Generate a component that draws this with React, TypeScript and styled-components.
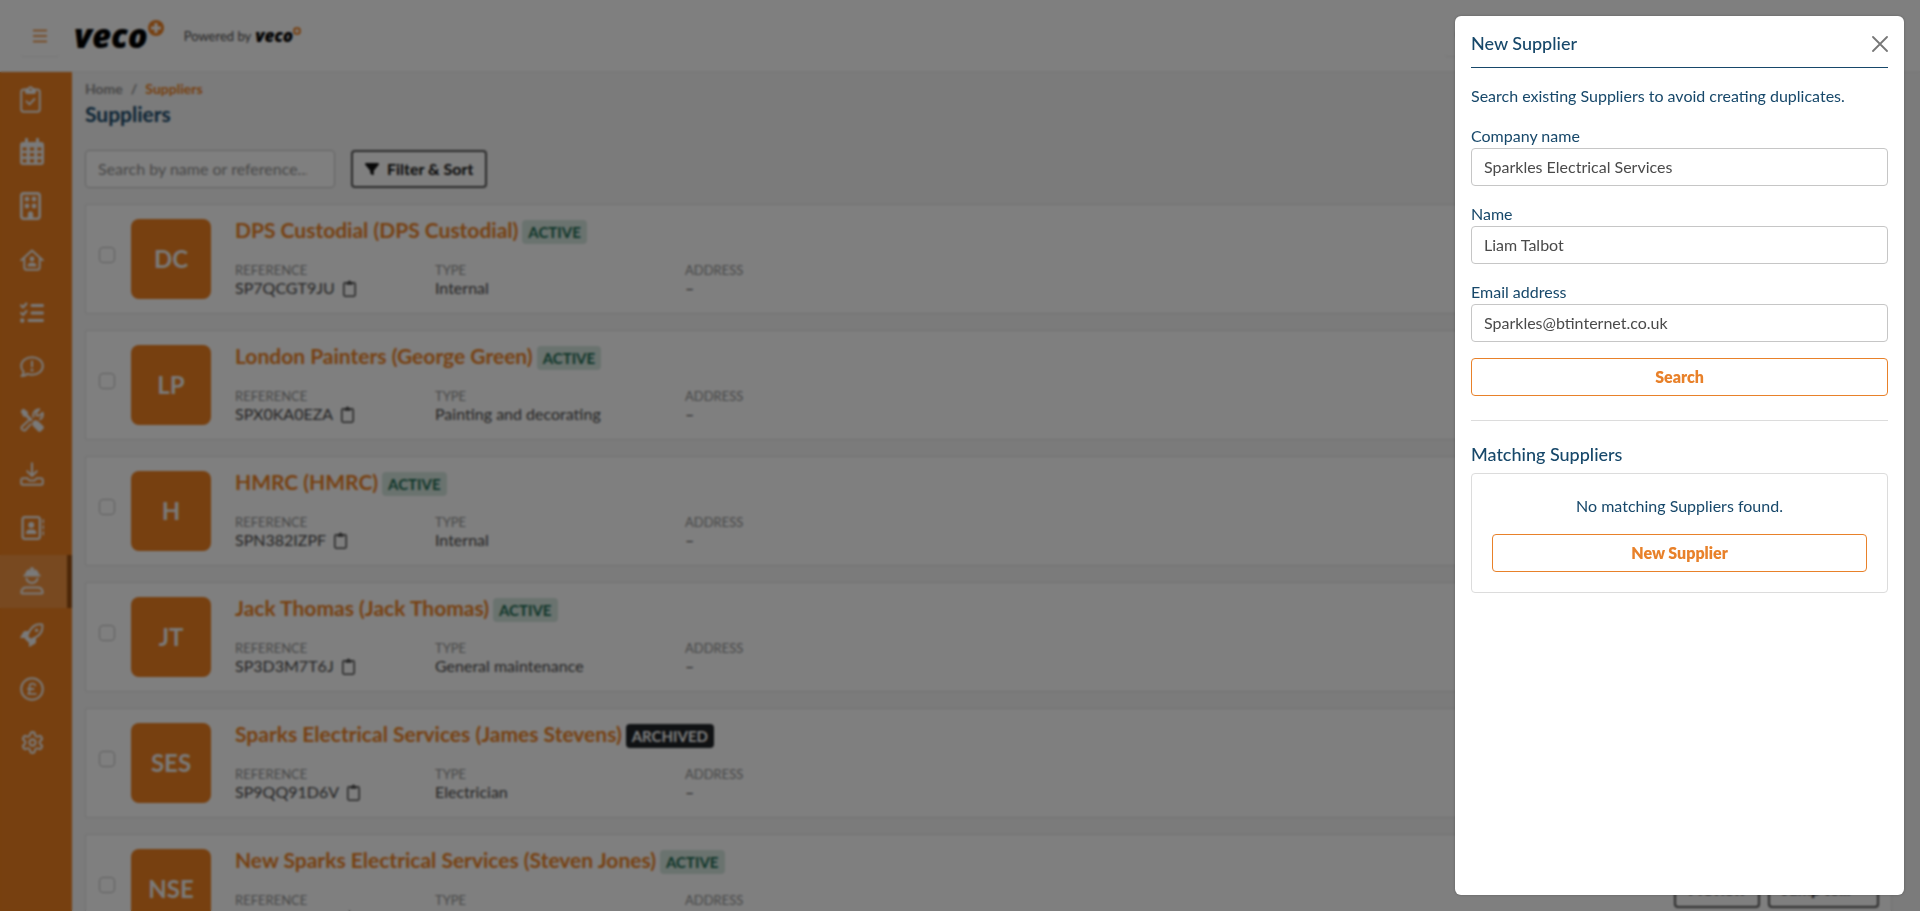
import React, { useId } from "react";
import styled, { createGlobalStyle, css } from "styled-components";
import {
  FaFilter,
  FaListCheck,
  FaMagnifyingGlass,
  FaRegAddressBook,
  FaRegBuilding,
} from "react-icons/fa6";
import { LuSettings } from "react-icons/lu";

const color = {
  orange: "#ee8020",
  action: "#e8812a",
  navy: "#17486a",
  text: "#4a4a4a",
  muted: "#8f8f8f",
  line: "#dcdcdc",
  field: "#c6c6c6",
  page: "#f6f6f6",
};

const GlobalStyle = createGlobalStyle`
  *, *::before, *::after { box-sizing: border-box; }
  html, body { margin: 0; height: 100%; overflow: hidden; }
  body {
    background: ${color.page};
    color: ${color.text};
    font-family: Lato, "Open Sans", sans-serif;
    font-size: 16px;
    line-height: 24px;
  }
  button, input { font: inherit; }
  h1, h2, h3, p, ul, ol, dl, dd { margin: 0; padding: 0; list-style: none; }
`;

/* ---------- header ---------- */

const Header = styled.header`
  display: flex;
  align-items: center;
  height: 72px;
  padding: 0 20px;
  background: #fff;
  border-bottom: 1px solid #f0f0f0;
`;

const IconButton = styled.button<{ $tone?: string }>`
  display: grid;
  place-items: center;
  width: 40px;
  height: 40px;
  padding: 0;
  border: 0;
  border-radius: 4px;
  background: #fff;
  color: ${(p) => p.$tone ?? "#222"};
  box-shadow: 0 2px 2px -1px rgba(0, 0, 0, 0.08);
`;

const Brand = styled.a`
  display: flex;
  margin-left: 14px;
  color: #000;
  text-decoration: none;
`;

const Wordmark = styled.span<{ $small?: boolean }>`
  display: flex;
  align-items: flex-start;
  font-family: "Open Sans", sans-serif;
  font-style: italic;
  font-weight: 800;
  font-size: ${(p) => (p.$small ? 17 : 33)}px;
  line-height: ${(p) => (p.$small ? 18 : 32)}px;
  color: #000;
`;

const Powered = styled.p`
  display: flex;
  align-items: center;
  gap: 4px;
  margin-left: 20px;
  font-size: 13px;
`;

const HeaderActions = styled.div`
  display: flex;
  flex: 0 0 456px;
  margin-left: auto;
`;

/* ---------- side navigation ---------- */

const Body = styled.div`
  display: flex;
  align-items: stretch;
  height: calc(100vh - 72px);
`;

const SideNav = styled.nav`
  flex: 0 0 72px;
  background: ${color.orange};
`;

const NavList = styled.ul`
  display: grid;
  grid-template-rows: repeat(13, 1fr);
  height: 697px;
`;

const NavLink = styled.a<{ $active?: boolean }>`
  display: flex;
  align-items: center;
  height: 100%;
  padding-left: 20px;
  color: #f4f4f4;
  ${(p) =>
    p.$active &&
    css`
      background: rgba(255, 255, 255, 0.15);
      border-right: 5px solid #9a4f10;
    `}
`;

const BuildingIcon = styled(FaRegBuilding)`
  width: 21px;
  height: 28px;
`;

/* ---------- supplier list ---------- */

const Main = styled.main`
  flex: 1;
  min-width: 0;
  padding: 8px 28px 0 13px;
  overflow: hidden;
`;

const Crumbs = styled.ol`
  display: flex;
  gap: 8px;
  font-size: 14px;
  font-weight: 700;
  line-height: 18px;
  color: ${color.muted};
`;

const Crumb = styled.a<{ $current?: boolean }>`
  color: ${(p) => (p.$current ? color.orange : color.muted)};
  text-decoration: none;
`;

const PageTitle = styled.h1`
  margin-top: 2px;
  font-size: 21px;
  line-height: 28px;
  color: ${color.navy};
`;

const Toolbar = styled.div`
  display: flex;
  gap: 16px;
  margin: 22px 0 16px;
`;

const SearchInput = styled.input`
  width: 250px;
  height: 38px;
  padding: 0 12px 2px;
  border: 1px solid ${color.field};
  border-radius: 4px;
  background: #fff;
  &::placeholder {
    color: ${color.muted};
    opacity: 1;
  }
`;

const DarkButton = styled.button`
  display: flex;
  align-items: center;
  gap: 8px;
  height: 38px;
  padding: 0 12px;
  border: 2px solid #555;
  border-radius: 4px;
  background: #fff;
  color: #111;
  font-weight: 700;
`;

const JumpButton = styled(DarkButton)`
  min-width: 111px;
`;

const CardList = styled.ul`
  display: grid;
  gap: 16px;
`;

const Card = styled.li`
  display: flex;
  align-items: center;
  height: 110px;
  padding: 0 12px;
  border: 1px solid #e2e2e2;
  border-radius: 2px;
  background: #fff;
`;

const Tick = styled.input`
  appearance: none;
  width: 16px;
  height: 16px;
  margin: 0 16px 8px 1px;
  border: 1px solid #bdbdbd;
  border-radius: 4px;
  background: #fff;
`;

const Avatar = styled.div`
  display: grid;
  place-items: center;
  width: 80px;
  height: 80px;
  border-radius: 8px;
  background: ${color.orange};
  color: #f6f6f6;
  font-size: 24px;
  font-weight: 700;
`;

const Details = styled.div`
  flex: 1;
  margin-left: 24px;
`;

const CardTitle = styled.h2`
  display: flex;
  gap: 4px;
  margin-bottom: 18px;
  font-size: 21px;
  line-height: 20px;
`;

const SupplierLink = styled.a`
  color: ${color.orange};
  text-decoration: none;
`;

const Badge = styled.span<{ $archived?: boolean }>`
  height: 24px;
  padding: 0 6px;
  border-radius: 4px;
  font-size: 15px;
  line-height: 24px;
  background: ${(p) => (p.$archived ? "#212529" : "#d5e6de")};
  color: ${(p) => (p.$archived ? "#fff" : "#1c6b52")};
`;

const Facts = styled.dl`
  display: grid;
  grid-template-columns: 200px 250px 1fr;
`;

const FactName = styled.dt`
  font-size: 13px;
  line-height: 16px;
  color: ${color.muted};
`;

const FactValue = styled.dd`
  display: flex;
  align-items: center;
  gap: 8px;
  line-height: 20px;
`;

const CopyButton = styled.button`
  display: flex;
  padding: 0;
  border: 0;
  background: none;
  color: ${color.text};
`;

const CardActions = styled.div`
  display: flex;
  gap: 8px;
`;

/* ---------- drawer ---------- */

const Backdrop = styled.div`
  position: fixed;
  inset: 0;
  display: flex;
  justify-content: flex-end;
  padding: 16px;
  background: rgba(0, 0, 0, 0.5);
  backdrop-filter: blur(1px);
`;

const Drawer = styled.section`
  width: 449px;
  padding: 16px;
  border-radius: 6px;
  background: #fff;
  color: ${color.navy};
  box-shadow: 0 0 3px rgba(0, 0, 0, 0.25);
`;

const DrawerHeader = styled.header`
  display: flex;
  justify-content: space-between;
  padding-bottom: 13px;
  border-bottom: 1px solid ${color.navy};
`;

const DrawerTitle = styled.h2`
  font-size: 18px;
  font-weight: 500;
  line-height: 22px;
`;

const CloseButton = styled.button`
  display: flex;
  align-items: center;
  padding: 2px 0 0;
  border: 0;
  background: none;
  color: #777;
`;

const Form = styled.form`
  display: grid;
  gap: 16px;
  padding: 16px 0 24px;
  border-bottom: 1px solid ${color.line};
`;

const FieldBox = styled.div`
  display: grid;
`;

const TextInput = styled.input`
  height: 38px;
  padding: 0 12px 2px;
  border: 1px solid ${color.field};
  border-radius: 4px;
  background: #fff;
  color: ${color.text};
`;

const OutlineButton = styled.button`
  width: 100%;
  height: 38px;
  border: 1px solid ${color.action};
  border-radius: 4px;
  background: #fff;
  color: ${color.action};
  font-weight: 800;
`;

const ResultsTitle = styled.h3`
  margin: 20px 0 6px;
  font-size: 18px;
  font-weight: 500;
  line-height: 26px;
`;

const Results = styled.div`
  display: grid;
  gap: 16px;
  padding: 20px;
  border: 1px solid ${color.line};
  border-radius: 4px;
  text-align: center;
`;

/* ---------- drawings ---------- */

const stroke = {
  fill: "none",
  stroke: "currentColor",
  strokeWidth: 2,
  strokeLinecap: "round",
  strokeLinejoin: "round",
} as const;

const Plus = ({ size }: { size: number }) => (
  <svg width={size} height={size} viewBox="0 0 16 16">
    <circle cx="8" cy="8" r="8" fill={color.orange} />
    <path d="M8 3v10M3 8h10" stroke="#fff" strokeWidth="3" />
  </svg>
);

const MenuIcon = () => (
  <svg width="14" height="14" viewBox="0 0 14 14" stroke="currentColor" strokeWidth="1.6">
    <path d="M0 1.5h14M0 7h14M0 12.5h14" />
  </svg>
);

const ClipboardCheck = () => (
  <svg width="21" height="28" viewBox="0 0 21 28" {...stroke}>
    <rect x="1.2" y="4.6" width="18.6" height="22.2" rx="2.6" />
    <path d="m6.5 16.400 3 3 5-5.400" />
    <path
      d="M5.5 4h2a3.100 3.100 0 0 1 6 0h2v3.500a1 1 0 0 1-1 1h-8a1 1 0 0 1-1-1z"
      fill="currentColor"
      strokeWidth="1"
    />
    <circle cx="10.5" cy="4.6" r="1.1" fill={color.orange} stroke="none" />
  </svg>
);

const CalendarIcon = () => (
  <svg width="24" height="28" viewBox="0 0 24 28" fill="currentColor">
    <path
      fillRule="evenodd"
      d="M5 1.200a1.500 1.500 0 0 1 3 0V4h8V1.200a1.500 1.500 0 0 1 3 0V4h2a3 3 0 0 1 3 3v17a3 3 0 0 1-3 3H3a3 3 0 0 1-3-3V7a3 3 0 0 1 3-3h2zM2.600 9.600v2.800h4V9.600zM9.900 9.600v2.800h4.200V9.600zM17.400 9.600v2.800h4V9.600zM2.600 15.300v3h4v-3zM9.900 15.300v3h4.200v-3zM17.400 15.300v3h4v-3zM2.600 21.200v3.200h4v-3.200zM9.900 21.200v3.200h4.200v-3.200zM17.400 21.200v3.200h4v-3.200z"
    />
  </svg>
);

const HouseUser = () => (
  <svg width="24" height="22" viewBox="0 0 24 22" {...stroke}>
    <path d="M1.200 11.200 12 1.600l10.800 9.600M4.300 9.500v8.700A2.600 2.600 0 0 0 6.900 20.800h10.200a2.600 2.600 0 0 0 2.600-2.600V9.500" />
    <circle cx="12" cy="10" r="2.4" fill="currentColor" stroke="none" />
    <path
      d="M7.600 17.400a3.600 3.600 0 0 1 3.600-3.600h1.600a3.600 3.600 0 0 1 3.600 3.600z"
      fill="currentColor"
      stroke="none"
    />
  </svg>
);

const CommentAlert = () => (
  <svg width="24" height="22" viewBox="0 0 24 22" {...stroke}>
    <path d="M12 1.300c6 0 10.800 3.800 10.800 8.700S18 18.700 12 18.700c-1.600 0-3.100-.3-4.500-.8-1.500 1.200-3.600 2-6 2.200 1.300-1.400 2-2.900 2.100-4.400C2.100 14.200 1.200 12.200 1.200 10 1.200 5.100 6 1.300 12 1.300z" />
    <path d="M12 5.600v5" />
    <circle cx="12" cy="14.2" r="1.4" fill="currentColor" stroke="none" />
  </svg>
);

const Tools = () => (
  <svg width="24" height="24" viewBox="0 0 24 24" {...stroke}>
    <path
      d="M.6 3.200 3.200.6l4.600 3.200v2.800l5 5-2.200 2.200-5-5H3.400z"
      fill="currentColor"
      stroke="none"
    />
    <path
      d="M14 12.600c1.500-.7 3.300-.4 4.500.8l4.700 4.700a2 2 0 0 1 0 2.800l-2.300 2.300a2 2 0 0 1-2.800 0l-4.700-4.700c-1.200-1.200-1.500-3-.8-4.500z"
      fill="currentColor"
      stroke="none"
    />
    <path d="m8.600 12.600-6.500 5.800a2.500 2.500 0 0 0 3.500 3.500l5-5.600" />
    <path d="M13.400 8.800c-.9-3.800 1.500-7.200 5.300-7.600l.6.200-2.900 2.900v3.300h3.300l2.900-2.900c.7 2.700-.3 5.200-2.400 6.500" />
  </svg>
);

const Download = () => (
  <svg width="24" height="24" viewBox="0 0 24 24" {...stroke}>
    <path d="M12 1.200v12.600M7.200 9.200l4.800 4.800 4.800-4.800" />
    <path d="M3 16.200h4.200l2 2.200h5.600l2-2.200H21a1.800 1.800 0 0 1 1.800 1.800v3a1.800 1.800 0 0 1-1.800 1.800H3A1.800 1.800 0 0 1 1.200 21v-3A1.800 1.800 0 0 1 3 16.200z" />
  </svg>
);

const HelmetUser = () => (
  <svg width="24" height="28" viewBox="0 0 24 28" {...stroke}>
    <path
      d="M5 7.600c.2-2.600 1.800-4.700 4.200-5.700l1 2.600V1.200a1 1 0 0 1 1-1h1.600a1 1 0 0 1 1 1v3.300l1-2.600c2.400 1 4 3.100 4.200 5.700h.8a.9.900 0 0 1 0 1.800H4.200a.9.900 0 0 1 0-1.800z"
      fill="currentColor"
      stroke="none"
    />
    <path d="M6.400 11.600c.7 2.600 2.900 4.300 5.600 4.300s4.900-1.700 5.600-4.300" />
    <path d="M6.500 20.600h11c2.900 0 5 2 5.200 5a1 1 0 0 1-1 1H2.300a1 1 0 0 1-1-1c.2-3 2.300-5 5.200-5z" />
  </svg>
);

const Rocket = () => (
  <svg width="24" height="24" viewBox="0 0 24 24" {...stroke}>
    <path d="M7.200 13.600C8.600 9 10.600 5.600 13.400 3.400c2.400-1.900 5.600-2.400 8.800-1.900.6 3.300 0 6.500-1.800 8.900-2.200 2.900-5.500 4.800-10 6.300z" />
    <circle cx="16.6" cy="7.3" r="1.7" fill="currentColor" stroke="none" />
    <path
      d="M9.600 8H5.200c-.8 0-1.500.4-1.900 1L.2 14.300c-.2.400 0 .8.500.8h4.900zM16 14.400v4.500c0 .8-.4 1.500-1 1.900l-5.300 3c-.4.200-.8 0-.8-.5v-5z"
      fill="currentColor"
      stroke="none"
    />
    <path d="m6.200 15.200 2.600 2.600" strokeWidth="3" />
  </svg>
);

const Sterling = () => (
  <svg width="24" height="24" viewBox="0 0 24 24" {...stroke}>
    <circle cx="12" cy="12" r="10.8" />
    <path
      d="M15.400 8.400c-.5-1.200-1.600-1.800-2.900-1.800-1.900 0-3 1.300-3 3v4.600c0 1.200-.5 2-1.300 2.700h7.600M8 12h5.600"
      strokeWidth="1.8"
    />
  </svg>
);

const ClipboardIcon = () => (
  <svg width="13" height="17" viewBox="0 0 13 17">
    <rect x=".8" y="2.8" width="11.4" height="13.4" rx="1.4" fill="none" stroke="currentColor" strokeWidth="1.5" />
    <path d="M3.400 2.200h1.400a1.700 1.700 0 0 1 3.400 0h1.400v2.600H3.400z" fill="currentColor" />
  </svg>
);

const CloseIcon = () => (
  <svg width="16" height="16" viewBox="0 0 16 16" stroke="currentColor" strokeWidth="1.8" strokeLinecap="round">
    <path d="m1 1 14 14M15 1 1 15" />
  </svg>
);

/* ---------- data ---------- */

const navItems = [
  { label: "Tasks", icon: <ClipboardCheck /> },
  { label: "Calendar", icon: <CalendarIcon /> },
  { label: "Properties", icon: <BuildingIcon /> },
  { label: "Tenancies", icon: <HouseUser /> },
  { label: "Checklists", icon: <FaListCheck size={24} /> },
  { label: "Enquiries", icon: <CommentAlert /> },
  { label: "Maintenance", icon: <Tools /> },
  { label: "Downloads", icon: <Download /> },
  { label: "Contacts", icon: <FaRegAddressBook size={24} /> },
  { label: "Suppliers", icon: <HelmetUser />, active: true },
  { label: "Marketing", icon: <Rocket /> },
  { label: "Accounts", icon: <Sterling /> },
  { label: "Settings", icon: <LuSettings size={25} /> },
];

const suppliers = [
  { initials: "DC", name: "DPS Custodial (DPS Custodial)", reference: "SP7QCGT9JU", type: "Internal" },
  { initials: "LP", name: "London Painters (George Green)", reference: "SPX0KA0EZA", type: "Painting and decorating" },
  { initials: "H", name: "HMRC (HMRC)", reference: "SPN382IZPF", type: "Internal" },
  { initials: "JT", name: "Jack Thomas (Jack Thomas)", reference: "SP3D3M7T6J", type: "General maintenance" },
  { initials: "SES", name: "Sparks Electrical Services (James Stevens)", reference: "SP9QQ91D6V", type: "Electrician", archived: true },
  { initials: "NSE", name: "New Sparks Electrical Services (Steven Jones)", reference: "SP4TR82K1M", type: "Electrician" },
];

type Supplier = (typeof suppliers)[number];

const SupplierCard = ({ supplier }: { supplier: Supplier }) => (
  <Card>
    <Tick type="checkbox" aria-label={`Select ${supplier.name}`} />
    <Avatar>{supplier.initials}</Avatar>
    <Details>
      <CardTitle>
        <SupplierLink href="#supplier">{supplier.name}</SupplierLink>
        <Badge $archived={supplier.archived}>{supplier.archived ? "ARCHIVED" : "ACTIVE"}</Badge>
      </CardTitle>
      <Facts>
        <div>
          <FactName>REFERENCE</FactName>
          <FactValue>
            {supplier.reference}
            <CopyButton aria-label="Copy reference">
              <ClipboardIcon />
            </CopyButton>
          </FactValue>
        </div>
        <div>
          <FactName>TYPE</FactName>
          <FactValue>{supplier.type}</FactValue>
        </div>
        <div>
          <FactName>ADDRESS</FactName>
          <FactValue>–</FactValue>
        </div>
      </Facts>
    </Details>
    <CardActions>
      <DarkButton>Preview</DarkButton>
      <JumpButton>Jump to...</JumpButton>
    </CardActions>
  </Card>
);

const Field = ({ label, value, type = "text" }: { label: string; value: string; type?: string }) => {
  const id = useId();
  return (
    <FieldBox>
      <label htmlFor={id}>{label}</label>
      <TextInput id={id} type={type} defaultValue={value} />
    </FieldBox>
  );
};

export default function App() {
  return (
    <>
      <GlobalStyle />
      <Header>
        <IconButton $tone={color.orange} aria-label="Toggle menu">
          <MenuIcon />
        </IconButton>
        <Brand href="#home">
          <Wordmark>
            veco
            <Plus size={16} />
          </Wordmark>
        </Brand>
        <Powered>
          Powered by
          <Wordmark $small>
            veco
            <Plus size={8} />
          </Wordmark>
        </Powered>
        <HeaderActions>
          <IconButton aria-label="Search">
            <FaMagnifyingGlass size={16} />
          </IconButton>
        </HeaderActions>
      </Header>
      <Body>
        <SideNav aria-label="Main">
          <NavList>
            {navItems.map((item) => (
              <li key={item.label}>
                <NavLink href="#section" aria-label={item.label} $active={item.active}>
                  {item.icon}
                </NavLink>
              </li>
            ))}
          </NavList>
        </SideNav>
        <Main>
          <Crumbs>
            <li>
              <Crumb href="#home">Home</Crumb>
            </li>
            <li>/</li>
            <li>
              <Crumb href="#suppliers" $current>
                Suppliers
              </Crumb>
            </li>
          </Crumbs>
          <PageTitle>Suppliers</PageTitle>
          <Toolbar>
            <SearchInput type="search" aria-label="Search suppliers" placeholder="Search by name or reference..." />
            <DarkButton>
              <FaFilter size={14} />
              Filter &amp; Sort
            </DarkButton>
          </Toolbar>
          <CardList>
            {suppliers.map((supplier) => (
              <SupplierCard key={supplier.initials} supplier={supplier} />
            ))}
          </CardList>
        </Main>
      </Body>
      <Backdrop>
        <Drawer role="dialog" aria-modal="true" aria-labelledby="drawer-title">
          <DrawerHeader>
            <DrawerTitle id="drawer-title">New Supplier</DrawerTitle>
            <CloseButton aria-label="Close">
              <CloseIcon />
            </CloseButton>
          </DrawerHeader>
          <Form onSubmit={(event) => event.preventDefault()}>
            <p>Search existing Suppliers to avoid creating duplicates.</p>
            <Field label="Company name" value="Sparkles Electrical Services" />
            <Field label="Name" value="Liam Talbot" />
            <Field label="Email address" value="Sparkles@btinternet.co.uk" type="email" />
            <OutlineButton type="submit">Search</OutlineButton>
          </Form>
          <ResultsTitle>Matching Suppliers</ResultsTitle>
          <Results>
            <p>No matching Suppliers found.</p>
            <OutlineButton type="button">New Supplier</OutlineButton>
          </Results>
        </Drawer>
      </Backdrop>
    </>
  );
}
